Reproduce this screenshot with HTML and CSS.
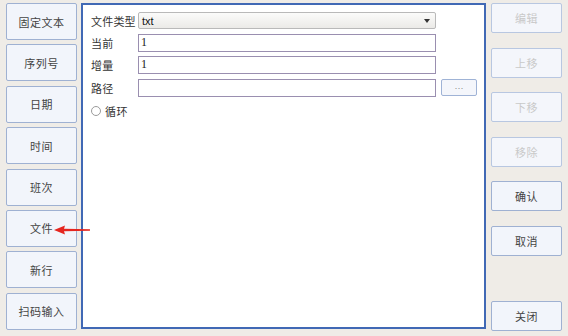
FILE: index.html
```html
<!DOCTYPE html>
<html lang="zh-CN">
<head>
    <meta charset="UTF-8">
    <meta name="viewport" content="width=device-width, initial-scale=1.0">
    <title>文件</title>
    <link rel="stylesheet" href="styles.css">
</head>
<body>
    <div id="app">
        <div class="left-col">
            <button class="btn">固定文本</button>
            <button class="btn">序列号</button>
            <button class="btn">日期</button>
            <button class="btn">时间</button>
            <button class="btn">班次</button>
            <button class="btn">文件</button>
            <button class="btn">新行</button>
            <button class="btn">扫码输入</button>
        </div>
        <div class="panel">
            <div class="row">
                <span class="label">文件类型</span>
                <div class="combo"><span>txt</span><span class="caret"></span></div>
            </div>
            <div class="row">
                <span class="label">当前</span>
                <div class="field">1</div>
            </div>
            <div class="row">
                <span class="label">增量</span>
                <div class="field">1</div>
            </div>
            <div class="row">
                <span class="label">路径</span>
                <div class="field"></div>
                <button class="browse">···</button>
            </div>
            <div class="row radio-row">
                <span class="radio"></span>
                <span>循环</span>
            </div>
        </div>
        <div class="right-col">
            <button class="btn small disabled">编辑</button>
            <button class="btn small disabled">上移</button>
            <button class="btn small disabled">下移</button>
            <button class="btn small disabled">移除</button>
            <button class="btn small">确认</button>
            <button class="btn small">取消</button>
            <button class="btn small close">关闭</button>
        </div>
        <svg class="arrow" width="40" height="12" viewBox="0 0 40 12">
            <path d="M2 6 L13 1.5 L12 4.8 L38 5.2 L38 6.8 L12 7.2 L13 10.5 Z" fill="#e5261f"/>
        </svg>
    </div>
</body>
</html>
```

FILE: styles.css
```css
body {
    margin: 0;
    background-color: #efece7;
    font-family: "Noto Sans CJK SC", "Liberation Serif", serif;
    font-size: 11px;
    color: #333;
}
#app {
    display: flex;
    height: 336px;
    padding: 3px 6px 0 6px;
    box-sizing: border-box;
    position: relative;
}
.left-col {
    width: 71px;
    display: grid;
    grid-template-rows: repeat(8, 37px);
    row-gap: 4.4px;
    align-content: start;
}
.btn {
    font-family: inherit;
    font-size: 11px;
    letter-spacing: 0.5px;
    color: #444;
    background-color: #f2f5fb;
    border: 1.5px solid #9fb1d2;
    border-radius: 2px;
    padding: 0;
    cursor: pointer;
}
.panel {
    width: 405px;
    height: 326px;
    box-sizing: border-box;
    margin-left: 4px;
    background-color: #fff;
    border: 2px solid #4169b5;
    padding: 7px 0 0 8px;
    display: flex;
    flex-direction: column;
    row-gap: 5px;
}
.row {
    display: flex;
    align-items: center;
    height: 17.4px;
}
.label {
    width: 47px;
    flex-shrink: 0;
    white-space: nowrap;
    letter-spacing: 0.2px;
    color: #333;
}
.combo {
    width: 298px;
    height: 17px;
    box-sizing: border-box;
    border: 1px solid #b9b9b9;
    border-radius: 2px;
    background: linear-gradient(#fbfbfa, #ebeae7);
    display: flex;
    align-items: center;
    justify-content: space-between;
    padding: 0 3px 0 3px;
    font-family: "Liberation Sans", sans-serif;
    font-size: 11px;
    color: #111;
}
.caret {
    width: 0;
    height: 0;
    border-left: 3.5px solid transparent;
    border-right: 3.5px solid transparent;
    border-top: 4px solid #333;
    margin-right: 2px;
}
.field {
    width: 298px;
    height: 18px;
    box-sizing: border-box;
    border: 1.5px solid #9a8fb0;
    background-color: #fff;
    padding-left: 2px;
    font-family: "Liberation Serif", serif;
    font-size: 12px;
    line-height: 15px;
    color: #222;
}
.browse {
    width: 36px;
    height: 17px;
    margin-left: 5px;
    padding: 0;
    background-color: #f4f6fb;
    border: 1px solid #9fb3d6;
    border-radius: 2px;
    color: #888;
    font-size: 9px;
    line-height: 12px;
}
.radio-row {
    margin-top: 1px;
    column-gap: 4px;
    letter-spacing: 0.5px;
}
.radio {
    width: 8px;
    height: 8px;
    border: 1px solid #9b9b9b;
    border-radius: 50%;
    background-color: #fff;
}
.right-col {
    margin-left: 5px;
    width: 71px;
    height: 328px;
    display: flex;
    flex-direction: column;
    row-gap: 14.6px;
}
.btn.small {
    height: 30px;
    flex-shrink: 0;
}
.btn.disabled {
    color: #c9c9c9;
    border-color: #b8c7e1;
    background-color: #f4f6fb;
}
.btn.close {
    margin-top: auto;
}
.arrow {
    position: absolute;
    left: 52px;
    top: 224px;
}
```
